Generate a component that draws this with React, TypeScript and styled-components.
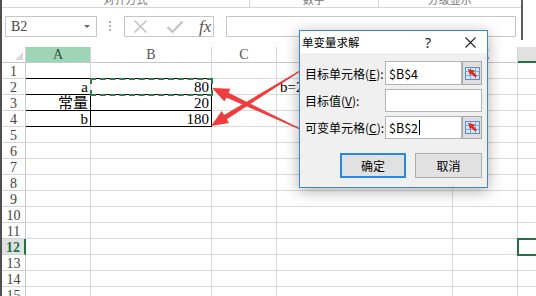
import styled, { createGlobalStyle } from "styled-components";

type Align = "left" | "right";

interface ICell {
  text: string;
  align: Align;
}

const COLS = ["A", "B", "C", "D", "E", "F"];
const ROW_COUNT = 15;
const SELECTED_ROW = 12;

const cells: Record<string, ICell> = {
  A2: { text: "a", align: "right" },
  B2: { text: "80", align: "right" },
  D2: { text: "b=2a+20", align: "left" },
  A3: { text: "常量", align: "right" },
  B3: { text: "20", align: "right" },
  A4: { text: "b", align: "right" },
  B4: { text: "180", align: "right" },
};

// cells with a black bottom / right border (the little table A2:B4)
const blackBottom = ["A1", "B1", "A2", "B2", "A3", "B3", "A4", "B4"];
const blackRight = ["A3", "A4", "B2", "B3", "B4"];

function arrowPoints(sx: number, sy: number, tx: number, ty: number) {
  const dx = tx - sx;
  const dy = ty - sy;
  const len = Math.hypot(dx, dy);
  const ux = dx / len;
  const uy = dy / len;
  const nx = -uy;
  const ny = ux;
  const head = 17;
  const hw = 7;
  const w0 = 0.6;
  const w1 = 2.6;
  const bx = tx - ux * head;
  const by = ty - uy * head;
  const pts = [
    [sx + nx * w0, sy + ny * w0],
    [bx + nx * w1, by + ny * w1],
    [bx + nx * hw, by + ny * hw],
    [tx, ty],
    [bx - nx * hw, by - ny * hw],
    [bx - nx * w1, by - ny * w1],
    [sx - nx * w0, sy - ny * w0],
  ];
  return pts.map((p) => `${p[0].toFixed(1)},${p[1].toFixed(1)}`).join(" ");
}

function PickerIcon() {
  return (
    <svg width="15" height="13" viewBox="0 0 15 13">
      <rect x="0.5" y="0.5" width="14" height="12" fill="#d6e5f6" stroke="#5f8cc4" />
      <path d="M0.5 4.5H14.5M0.5 8.5H14.5M5.5 0.5V12.5M10.5 0.5V12.5" stroke="#86a9d6" strokeWidth="1" />
      <polygon points="3,2 10,3.6 8.4,5.2 12,8.8 10.2,10.6 6.6,7 5,8.6" fill="#d8321c" />
    </svg>
  );
}

function App() {
  const rows = Array.from({ length: ROW_COUNT }, (_, i) => i + 1);

  return (
    <>
      <GlobalStyle />
      <Page>
        <Top>
          <TopMain>
            <Ribbon>
              <RibbonGroup $width={248}>
                <CutText>对齐方式</CutText>
              </RibbonGroup>
              <RibbonGroup $width={128}>
                <CutText>数字</CutText>
              </RibbonGroup>
              <RibbonGroup $width={143} $last>
                <CutText>分级显示</CutText>
              </RibbonGroup>
            </Ribbon>
            <FormulaBar>
              <NameBox>
                B2
                <Caret />
              </NameBox>
              <Dots>
                <i />
                <i />
                <i />
              </Dots>
              <FxBox>
                <svg width="15" height="15" viewBox="0 0 15 15">
                  <path d="M1.5 1.5L13.5 13.5M13.5 1.5L1.5 13.5" stroke="#c4c4c4" strokeWidth="1.6" />
                </svg>
                <svg width="18" height="14" viewBox="0 0 18 14">
                  <path d="M1.5 7L6.5 12L16.5 1.5" stroke="#c4c4c4" strokeWidth="2.2" fill="none" />
                </svg>
                <FxText>fx</FxText>
              </FxBox>
              <FormulaInput />
            </FormulaBar>
          </TopMain>
          <DarkEdge />
        </Top>

        <Sheet>
          <Corner>
            <svg width="8" height="8" viewBox="0 0 8 8">
              <polygon points="8,0 8,8 0,8" fill="#d9d9d9" />
            </svg>
          </Corner>
          {COLS.map((c) => (
            <ColHeader key={c} $active={c === "A"} $current={c === "F"}>
              {c}
            </ColHeader>
          ))}

          {rows.map((r) => (
            <Row key={r} r={r} />
          ))}
        </Sheet>

        <Arrows width="540" height="296" viewBox="0 0 540 296">
          <polygon points={arrowPoints(300, 71, 211, 126)} fill="#f03c3c" />
          <polygon points={arrowPoints(300, 129, 212, 88)} fill="#f03c3c" />
        </Arrows>

        <Dialog>
          <TitleBar>
            <Title>单变量求解</Title>
            <HelpBtn>?</HelpBtn>
            <CloseBtn>
              <svg width="11" height="11" viewBox="0 0 11 11">
                <path d="M0.5 0.5L10.5 10.5M10.5 0.5L0.5 10.5" stroke="#222" strokeWidth="1.1" />
              </svg>
            </CloseBtn>
          </TitleBar>
          <DialogBody>
            <Label>
              目标单元格(<u>E</u>):
            </Label>
            <FieldWrap $h={24}>
              <Field>$B$4</Field>
              <PickBtn>
                <PickerIcon />
              </PickBtn>
            </FieldWrap>

            <Label>
              目标值(<u>V</u>):
            </Label>
            <FieldWrap $h={23}>
              <Field />
            </FieldWrap>

            <Label>
              可变单元格(<u>C</u>):
            </Label>
            <FieldWrap $h={23}>
              <Field>
                $B$2
                <TextCursor />
              </Field>
              <PickBtn>
                <PickerIcon />
              </PickBtn>
            </FieldWrap>

            <ButtonRow>
              <DlgButton $primary>确定</DlgButton>
              <DlgButton>取消</DlgButton>
            </ButtonRow>
          </DialogBody>
        </Dialog>
      </Page>
    </>
  );
}

function Row({ r }: { r: number }) {
  const selected = r === SELECTED_ROW;
  return (
    <>
      <RowHeader $current={selected}>{r}</RowHeader>
      {COLS.map((c) => {
        const id = `${c}${r}`;
        const cell = cells[id];
        return (
          <Cell
            key={id}
            $align={cell ? cell.align : "right"}
            $bb={blackBottom.includes(id)}
            $br={blackRight.includes(id)}
            $ants={id === "B2"}
            $active={c === "F" && selected}
          >
            {cell ? cell.text : ""}
          </Cell>
        );
      })}
    </>
  );
}

export default App;

const GlobalStyle = createGlobalStyle`
  html, body {
    margin: 0;
    padding: 0;
    background: #ffffff;
  }
  body {
    width: 536px;
    height: 296px;
    overflow: hidden;
    font-family: "Liberation Serif", "Noto Sans CJK SC", serif;
  }
`;

const Page = styled.div`
  position: relative;
  width: 536px;
  height: 296px;
  overflow: hidden;
  box-sizing: border-box;
  border-left: 2px solid #4f4f4f;
  background: #ffffff;
`;

const Top = styled.div`
  display: flex;
  height: 47px;
`;

const TopMain = styled.div`
  width: 519px;
  display: flex;
  flex-direction: column;
`;

const DarkEdge = styled.div`
  width: 2px;
  height: 40px;
  background: #5c5c5c;
`;

const Ribbon = styled.div`
  display: flex;
  height: 8px;
  box-sizing: border-box;
  border-bottom: 1px solid #d6d6d6;
  overflow: hidden;
`;

const RibbonGroup = styled.div<{ $width: number; $last?: boolean }>`
  width: ${(p) => p.$width}px;
  display: flex;
  justify-content: center;
  overflow: hidden;
  border-right: ${(p) => (p.$last ? "none" : "1px solid #d6d6d6")};
`;

const CutText = styled.span`
  margin-top: -8px;
  font-family: "Noto Sans CJK SC", sans-serif;
  font-size: 11px;
  line-height: 14px;
  color: #777777;
`;

const FormulaBar = styled.div`
  display: flex;
  align-items: flex-start;
  padding-top: 8px;
`;

const NameBox = styled.div`
  position: relative;
  margin-left: 3px;
  width: 92px;
  height: 21px;
  box-sizing: border-box;
  border: 1px solid #c6c6c6;
  padding-left: 5px;
  font-size: 14px;
  line-height: 20px;
  color: #444444;
`;

const Caret = styled.span`
  position: absolute;
  right: 6px;
  top: 8px;
  border-left: 3px solid transparent;
  border-right: 3px solid transparent;
  border-top: 3px solid #666666;
`;

const Dots = styled.div`
  display: flex;
  flex-direction: column;
  gap: 2px;
  margin: 5px 13px 0 12px;

  i {
    width: 2px;
    height: 2px;
    background: #b0b0b0;
  }
`;

const FxBox = styled.div`
  width: 90px;
  height: 21px;
  box-sizing: border-box;
  border: 1px solid #c6c6c6;
  display: flex;
  align-items: center;
  padding-left: 8px;
  gap: 18px;
`;

const FxText = styled.span`
  margin-left: -3px;
  font-family: "Liberation Serif", serif;
  font-style: italic;
  font-size: 17px;
  line-height: 18px;
  color: #555555;
`;

const FormulaInput = styled.div`
  margin-left: 12px;
  width: 290px;
  height: 21px;
  box-sizing: border-box;
  border: 1px solid #c6c6c6;
`;

const Sheet = styled.div`
  display: grid;
  grid-template-columns: 24px 65px 121px 65px 176px 65px 65px;
  grid-auto-rows: 16px;
`;

const Corner = styled.div`
  box-sizing: border-box;
  border-right: 1px solid #d4d4d4;
  border-bottom: 1px solid #c8c8c8;
  display: flex;
  align-items: flex-end;
  justify-content: flex-end;
  padding: 0 2px 2px 0;
`;

const ColHeader = styled.div<{ $active: boolean; $current: boolean }>`
  box-sizing: border-box;
  border-right: 1px solid #d4d4d4;
  border-bottom: ${(p) => (p.$current ? "2px solid #217346" : "1px solid #c8c8c8")};
  background: ${(p) => (p.$active ? "#9fd5b7" : p.$current ? "#e1e1e1" : "#ffffff")};
  color: ${(p) => (p.$active ? "#2f4f3c" : "#555555")};
  font-size: 14px;
  line-height: 16px;
  text-align: center;
`;

const RowHeader = styled.div<{ $current: boolean }>`
  box-sizing: border-box;
  border-right: ${(p) => (p.$current ? "2px solid #217346" : "1px solid #c8c8c8")};
  border-bottom: 1px solid #d4d4d4;
  background: ${(p) => (p.$current ? "#e1e1e1" : "#ffffff")};
  color: ${(p) => (p.$current ? "#217346" : "#444444")};
  font-weight: ${(p) => (p.$current ? "bold" : "normal")};
  font-size: 14px;
  line-height: 17px;
  text-align: center;
`;

const Cell = styled.div<{
  $align: Align;
  $bb: boolean;
  $br: boolean;
  $ants: boolean;
  $active: boolean;
}>`
  position: relative;
  box-sizing: border-box;
  border-right: 1px solid ${(p) => (p.$br ? "#000000" : "#d9d9d9")};
  border-bottom: 1px solid ${(p) => (p.$bb ? "#000000" : "#d9d9d9")};
  padding: 0 2px 0 3px;
  font-size: 15px;
  line-height: 16px;
  color: #000000;
  white-space: nowrap;
  text-align: ${(p) => p.$align};
  outline: ${(p) =>
    p.$ants ? "2px dashed #2f7d4f" : p.$active ? "2px solid #217346" : "none"};
  outline-offset: -1px;
  z-index: ${(p) => (p.$ants || p.$active ? 1 : 0)};
`;

const Arrows = styled.svg`
  position: absolute;
  left: -2px;
  top: 0;
  pointer-events: none;
  z-index: 2;
`;

const Dialog = styled.div`
  position: absolute;
  left: 297px;
  top: 30px;
  width: 189px;
  height: 158px;
  box-sizing: border-box;
  border: 1px solid #3b87d4;
  background: #f0f0f0;
  box-shadow: 0 3px 14px rgba(0, 0, 0, 0.32);
  font-family: "Noto Sans CJK SC", sans-serif;
  z-index: 3;
`;

const TitleBar = styled.div`
  height: 22px;
  display: flex;
  align-items: center;
  background: #ffffff;
  padding-left: 2px;
`;

const Title = styled.div`
  flex: 1;
  font-size: 11.5px;
  color: #000000;
`;

const HelpBtn = styled.div`
  width: 30px;
  margin-right: 10px;
  text-align: center;
  font-family: "Noto Sans", sans-serif;
  font-size: 14px;
  color: #222222;
`;

const CloseBtn = styled.div`
  width: 34px;
  display: flex;
  justify-content: center;
`;

const DialogBody = styled.div`
  display: grid;
  grid-template-columns: 80px 97px;
  row-gap: 4px;
  align-items: center;
  padding: 8px 6px 0 5px;
`;

const Label = styled.div`
  font-size: 12px;
  color: #000000;
  white-space: nowrap;

  u {
    text-underline-offset: 1px;
  }
`;

const FieldWrap = styled.div<{ $h: number }>`
  display: flex;
  height: ${(p) => p.$h}px;
`;

const Field = styled.div`
  flex: 1;
  display: flex;
  align-items: center;
  box-sizing: border-box;
  border: 1px solid #b4b4b4;
  background: #ffffff;
  padding-left: 3px;
  font-size: 12.5px;
  color: #000000;
`;

const TextCursor = styled.span`
  width: 1px;
  height: 15px;
  margin-left: 1px;
  background: #000000;
`;

const PickBtn = styled.div`
  width: 20px;
  display: flex;
  align-items: center;
  justify-content: center;
  box-sizing: border-box;
  border: 1px solid #a8a8a8;
  background: #dedede;
`;

const ButtonRow = styled.div`
  grid-column: 1 / span 2;
  display: flex;
  justify-content: flex-end;
  gap: 9px;
  margin-top: 10px;
`;

const DlgButton = styled.div<{ $primary?: boolean }>`
  width: ${(p) => (p.$primary ? 66 : 67)}px;
  height: 25px;
  box-sizing: border-box;
  border: ${(p) => (p.$primary ? "2px solid #2f87da" : "1px solid #adadad")};
  background: #e1e1e1;
  display: flex;
  align-items: center;
  justify-content: center;
  font-size: 12px;
  color: #000000;
`;
